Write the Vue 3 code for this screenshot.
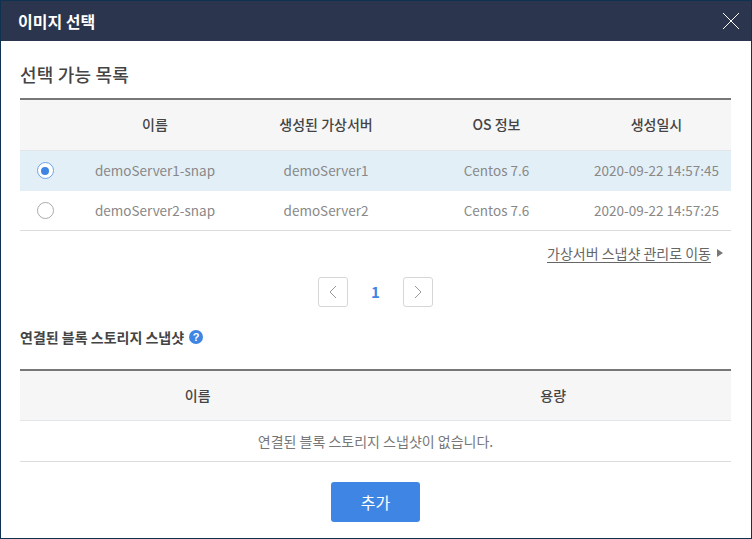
<script setup>
const rows = [
  { name: 'demoServer1-snap', server: 'demoServer1', os: 'Centos 7.6', date: '2020-09-22 14:57:45', selected: true },
  { name: 'demoServer2-snap', server: 'demoServer2', os: 'Centos 7.6', date: '2020-09-22 14:57:25', selected: false },
]
</script>

<template>
  <div class="dialog">
    <header class="head">
      <h1>이미지 선택</h1>
      <svg class="close" width="18" height="18" viewBox="0 0 18 18"><path d="M1 1 L17 17 M17 1 L1 17" stroke="#fff" stroke-width="1" fill="none" /></svg>
    </header>
    <main class="body">
      <h2 class="title">선택 가능 목록</h2>
      <table class="tbl list">
        <colgroup>
          <col style="width:49px" /><col style="width:172px" /><col style="width:170px" /><col style="width:171px" /><col style="width:149px" />
        </colgroup>
        <thead>
          <tr><th></th><th>이름</th><th>생성된 가상서버</th><th>OS 정보</th><th>생성일시</th></tr>
        </thead>
        <tbody>
          <tr v-for="r in rows" :key="r.name" :class="{ sel: r.selected }">
            <td class="radio-cell"><span class="radio" :class="{ on: r.selected }"></span></td>
            <td>{{ r.name }}</td>
            <td>{{ r.server }}</td>
            <td>{{ r.os }}</td>
            <td>{{ r.date }}</td>
          </tr>
        </tbody>
      </table>
      <div class="link-row">
        <a class="link">가상서버 스냅샷 관리로 이동</a>
        <span class="arrow"></span>
      </div>
      <nav class="pager">
        <span class="pg"><svg width="10" height="16" viewBox="0 0 10 16"><path d="M8 2 L2 8 L8 14" stroke="#999" fill="none" /></svg></span>
        <span class="num">1</span>
        <span class="pg"><svg width="10" height="16" viewBox="0 0 10 16"><path d="M2 2 L8 8 L2 14" stroke="#999" fill="none" /></svg></span>
      </nav>
      <div class="sub">
        <h3>연결된 블록 스토리지 스냅샷</h3>
        <span class="help">?</span>
      </div>
      <table class="tbl second">
        <thead><tr><th>이름</th><th>용량</th></tr></thead>
        <tbody><tr><td colspan="2">연결된 블록 스토리지 스냅샷이 없습니다.</td></tr></tbody>
      </table>
      <div class="actions"><button class="add">추가</button></div>
    </main>
  </div>
</template>

<style>
html, body { margin: 0; background: #fff; }
</style>

<style scoped>
.dialog {
  width: 752px;
  height: 539px;
  box-sizing: border-box;
  border: 1px solid #0e3250;
  background: #fff;
  font-family: "Noto Sans CJK KR", "Noto Sans", sans-serif;
  color: #666;
  overflow: hidden;
}
.head {
  height: 40px;
  background: #2b354d;
  display: flex;
  align-items: center;
  justify-content: space-between;
  padding: 0 11px 0 17px;
}
.head h1 { margin: 0; font-size: 16px; font-weight: 700; color: #fff; line-height: 40px; }
.close { display: block; margin-top: -1px; }
.body { padding: 0 19px; }
.title { margin: 0 0 12px; padding-top: 21px; height: 24px; line-height: 24px; font-size: 18px; font-weight: 500; color: #444; box-sizing: content-box; letter-spacing: 0.2px; }
.tbl { width: 711px; border-collapse: collapse; table-layout: fixed; border-top: 2px solid #777; font-size: 13.5px; }
.tbl th { height: 51px; padding: 0 0 1px; box-sizing: border-box; background: #f6f6f6; border-bottom: 1px solid #e3e6e8; font-size: 14px; font-weight: 500; color: #444; text-align: center; }
.tbl td { padding: 0; box-sizing: content-box; border-bottom: 1px solid #dcdcdc; text-align: center; color: #888; }
.list td { height: 39px; }
.list tbody tr:first-child td { border-bottom: 1px solid #e3eff7; }
.sel td { background: #e3eff7; }
.list .radio-cell { height: 37px; padding: 0 0 2px 1px; }
.radio { display: inline-block; width: 17px; height: 17px; box-sizing: border-box; border: 1px solid #aaa; border-radius: 50%; background: #fff; vertical-align: middle; position: relative; }
.radio.on { border-color: #6ba3ea; }
.radio.on::after { content: ""; position: absolute; left: 3.5px; top: 3.5px; width: 8px; height: 8px; border-radius: 50%; background: #3f86e4; }
.link-row { display: flex; justify-content: flex-end; align-items: center; height: 20px; margin-top: 12px; }
.link { font-size: 14px; color: #666; text-decoration: underline; text-underline-offset: 3px; line-height: 20px; }
.arrow { margin: 0 9px 0 6px; border-left: 6px solid #777; border-top: 4px solid transparent; border-bottom: 4px solid transparent; }
.pager { display: flex; justify-content: center; align-items: center; margin: 14px 1px 0 0; height: 30px; }
.pg { width: 30px; height: 30px; box-sizing: border-box; border: 1px solid #d6d6d6; border-radius: 3px; display: flex; align-items: center; justify-content: center; background: #fff; }
.num { width: 55px; text-align: center; font-size: 15px; font-weight: 700; color: #3f86e4; }
.sub { display: flex; align-items: center; gap: 5px; margin-top: 18px; height: 24px; }
.sub h3 { margin: 0; font-size: 14px; font-weight: 700; color: #444; }
.help { width: 14px; height: 14px; border-radius: 50%; background: #3f86e4; color: #fff; font-size: 11px; font-weight: 700; line-height: 14px; text-align: center; font-family: "Liberation Sans", sans-serif; }
.second { margin-top: 20px; }
.second td { height: 40px; font-size: 14px; color: #777; }
.actions { display: flex; justify-content: center; margin: 20px 1px 0 0; }
.add { width: 89px; height: 40px; border: 0; border-radius: 3px; background: #3f86e4; color: #fff; font-family: inherit; font-size: 16px; font-weight: 400; padding: 0; }
</style>
